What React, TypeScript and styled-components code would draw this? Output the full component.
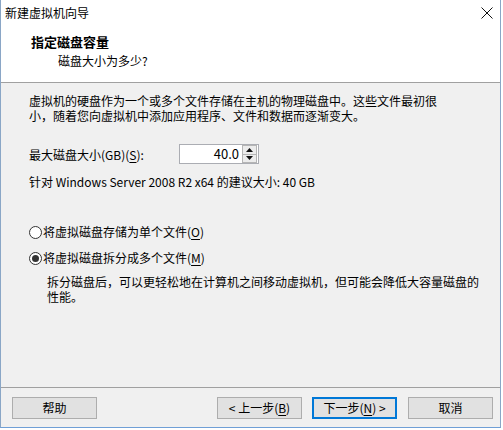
import React from "react";
import styled, { createGlobalStyle } from "styled-components";

const GlobalStyle = createGlobalStyle`
  html, body {
    margin: 0;
    padding: 0;
    background: #ffffff;
  }
  body {
    font-family: "Noto Sans CJK SC", "Noto Sans", sans-serif;
    font-size: 12px;
    color: #000;
  }
  * { box-sizing: border-box; }
`;

const Window = styled.div`
  width: 501px;
  height: 428px;
  display: flex;
  flex-direction: column;
  border-left: 1px solid #8aa6c6;
  border-right: 1px solid #8aa6c6;
  border-bottom: 1px solid #6f9fd6;
  background: #f0f0f0;
`;

const TitleBar = styled.div`
  height: 27px;
  display: flex;
  align-items: center;
  justify-content: space-between;
  padding: 0 7px 1px 4px;
  background: #ffffff;
`;

const TitleText = styled.span`
  font-size: 12px;
  line-height: 16px;
`;

const CloseIcon = styled.svg`
  width: 12px;
  height: 12px;
  display: block;
  margin-top: 0px;
`;

const Header = styled.div`
  height: 56px;
  background: #ffffff;
  border-bottom: 1px solid #a0a0a0;
  padding: 7px 0 0 30px;
  display: flex;
  flex-direction: column;
`;

const HeaderTitle = styled.div`
  font-weight: 700;
  font-size: 13px;
  line-height: 16px;
`;

const HeaderSub = styled.div`
  margin-top: 3px;
  padding-left: 27px;
  line-height: 16px;
`;

const Body = styled.div`
  flex: 1;
  padding: 10px 0 0 28px;
  display: flex;
  flex-direction: column;
`;

const Para = styled.div<{ $indent?: number; $mt?: number }>`
  line-height: 15px;
  padding-left: ${(p) => p.$indent ?? 0}px;
  margin-top: ${(p) => p.$mt ?? 0}px;
  white-space: nowrap;
`;

const SizeRow = styled.div`
  margin-top: 21px;
  height: 20px;
  display: flex;
  align-items: center;
`;

const SizeLabel = styled.span`
  width: 150px;
  line-height: 16px;
  padding-top: 1px;
`;

const SpinBox = styled.div`
  width: 80px;
  height: 20px;
  border: 1px solid #abadb3;
  background: #ffffff;
  display: flex;
  align-items: stretch;
`;

const SpinValue = styled.div`
  flex: 1;
  text-align: right;
  padding-right: 3px;
  font-size: 13px;
  line-height: 18px;
`;

const SpinButtons = styled.div`
  width: 16px;
  display: flex;
  flex-direction: column;
  padding: 0 1px 0 0;
`;

const SpinBtn = styled.div`
  flex: 1;
  display: flex;
  align-items: center;
  justify-content: center;
  background: #ececec;
  border: 1px solid #b5b5b5;
  & + & {
    margin-top: 0;
    border-top: none;
  }
`;

const Radio = styled.label<{ $mt: number }>`
  display: flex;
  align-items: center;
  margin-top: ${(p) => p.$mt}px;
  line-height: 16px;
  height: 16px;
`;

const RadioCircle = styled.span<{ $checked?: boolean }>`
  width: 13px;
  height: 13px;
  border-radius: 50%;
  border: 1px solid #333333;
  background: #ffffff;
  margin-right: 1px;
  display: flex;
  align-items: center;
  justify-content: center;
  &::after {
    content: "";
    width: 7px;
    height: 7px;
    border-radius: 50%;
    background: ${(p) => (p.$checked ? "#333333" : "transparent")};
  }
`;

const U = styled.span`
  text-decoration: underline;
  text-underline-offset: 2px;
`;

const Footer = styled.div`
  height: 40px;
  border-top: 1px solid #a0a0a0;
  padding: 9px 7px 0 11px;
  display: flex;
  align-items: flex-start;
`;

const Spacer = styled.div`
  flex: 1;
`;

const Button = styled.div<{ $primary?: boolean; $ml?: number }>`
  width: 85px;
  height: 22px;
  margin-left: ${(p) => p.$ml ?? 0}px;
  background: #e1e1e1;
  border: ${(p) => (p.$primary ? "2px solid #0078d7" : "1px solid #adadad")};
  display: flex;
  align-items: center;
  justify-content: center;
  line-height: 16px;
`;

export default function App() {
  return (
    <>
      <GlobalStyle />
      <Window>
        <TitleBar>
          <TitleText>新建虚拟机向导</TitleText>
          <CloseIcon viewBox="0 0 12 12">
            <path d="M0.5 0.5 L11.5 11.5 M11.5 0.5 L0.5 11.5" stroke="#111" strokeWidth="1" fill="none" />
          </CloseIcon>
        </TitleBar>
        <Header>
          <HeaderTitle>指定磁盘容量</HeaderTitle>
          <HeaderSub>磁盘大小为多少?</HeaderSub>
        </Header>
        <Body>
          <Para>虚拟机的硬盘作为一个或多个文件存储在主机的物理磁盘中。这些文件最初很</Para>
          <Para>小，随着您向虚拟机中添加应用程序、文件和数据而逐渐变大。</Para>
          <SizeRow>
            <SizeLabel>
              最大磁盘大小(GB)(<U>S</U>):
            </SizeLabel>
            <SpinBox>
              <SpinValue>40.0</SpinValue>
              <SpinButtons>
                <SpinBtn>
                  <svg width="7" height="4" viewBox="0 0 7 4">
                    <path d="M0 4 L3.5 0 L7 4 Z" fill="#111" />
                  </svg>
                </SpinBtn>
                <SpinBtn>
                  <svg width="7" height="4" viewBox="0 0 7 4">
                    <path d="M0 0 L3.5 4 L7 0 Z" fill="#111" />
                  </svg>
                </SpinBtn>
              </SpinButtons>
            </SpinBox>
          </SizeRow>
          <Para $mt={10}>针对 Windows Server 2008 R2 x64 的建议大小: 40 GB</Para>
          <Radio $mt={35}>
            <RadioCircle />
            将虚拟磁盘存储为单个文件(<U>O</U>)
          </Radio>
          <Radio $mt={10}>
            <RadioCircle $checked />
            将虚拟磁盘拆分成多个文件(<U>M</U>)
          </Radio>
          <Para $indent={18} $mt={8}>
            拆分磁盘后，可以更轻松地在计算机之间移动虚拟机，但可能会降低大容量磁盘的
          </Para>
          <Para $indent={18}>性能。</Para>
        </Body>
        <Footer>
          <Button>帮助</Button>
          <Spacer />
          <Button>
            &lt; 上一步(<U>B</U>)
          </Button>
          <Button $primary $ml={10}>
            下一步(<U>N</U>) &gt;
          </Button>
          <Button $ml={11}>取消</Button>
        </Footer>
      </Window>
    </>
  );
}
